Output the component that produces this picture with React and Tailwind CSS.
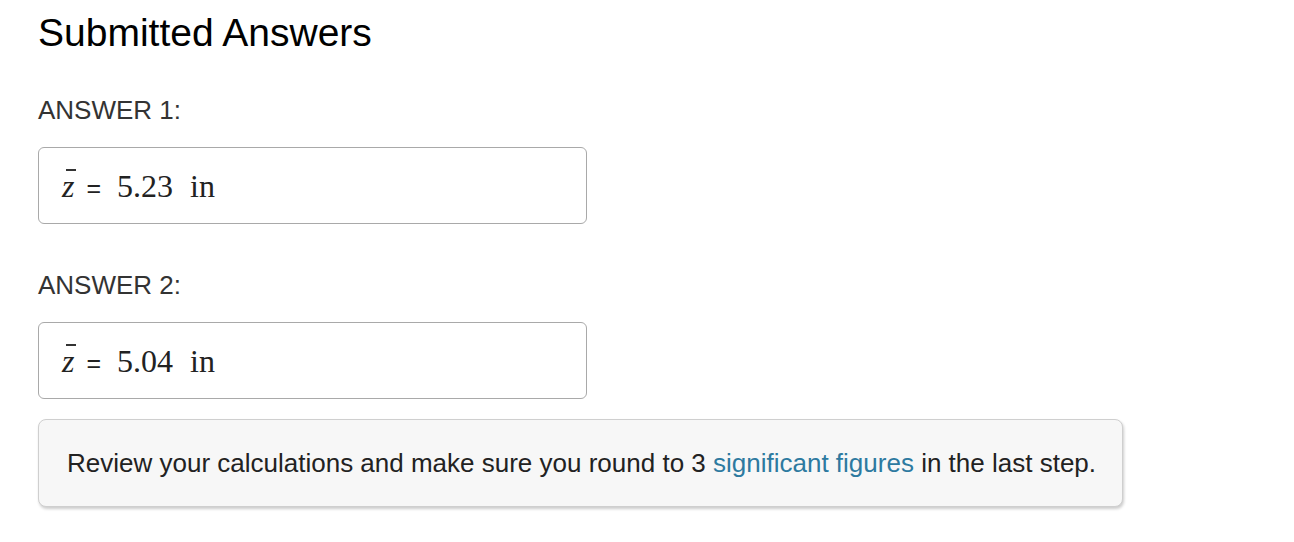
import React from 'react';

const answers = [
  { label: 'ANSWER 1:', value: '5.23', unit: 'in' },
  { label: 'ANSWER 2:', value: '5.04', unit: 'in' },
];

function ZBar() {
  return (
    <span className="relative inline-block italic">
      z
      <span className="absolute left-[4px] top-[7px] h-[2px] w-[10px] bg-[#333]" />
    </span>
  );
}

function AnswerBox({ value, unit }) {
  return (
    <div className="flex h-[77px] w-[549px] items-center rounded-[6px] border border-[#a9a9a9] pl-[23px]">
      <div className="flex items-baseline text-[#222]" style={{ fontFamily: '"Liberation Serif", serif' }}>
        <span className="text-[32px]"><ZBar /></span>
        <span className="ml-[12px] text-[25px] font-['Liberation_Sans',sans-serif]">=</span>
        <span className="ml-[16px] text-[32px]">{value}</span>
        <span className="ml-[17px] text-[32px]">{unit}</span>
      </div>
    </div>
  );
}

export default function App() {
  return (
    <div className="min-h-[542px] bg-white pl-[38px] pt-[11px] font-['Liberation_Sans',Arial,sans-serif]">
      <h1 className="text-[39px] leading-[44px] text-black">Submitted Answers</h1>

      {answers.map((a, i) => (
        <div key={a.label} className={i === 0 ? 'mt-[40px]' : 'mt-[46px]'}>
          <div className="text-[26px] leading-[30px] text-[#333]">{a.label}</div>
          <div className="mt-[22px]">
            <AnswerBox value={a.value} unit={a.unit} />
          </div>
        </div>
      ))}

      <div className="mt-[20px] flex h-[88px] w-[1085px] items-center rounded-[8px] border border-[#cfcfcf] bg-[#f7f7f7] pl-[28px] shadow-[1px_2px_3px_rgba(0,0,0,0.2)]">
        <p className="text-[26px] text-[#222]">
          Review your calculations and make sure you round to 3{' '}
          <a className="text-[#2d7aa0]">significant figures</a> in the last step.
        </p>
      </div>
    </div>
  );
}
